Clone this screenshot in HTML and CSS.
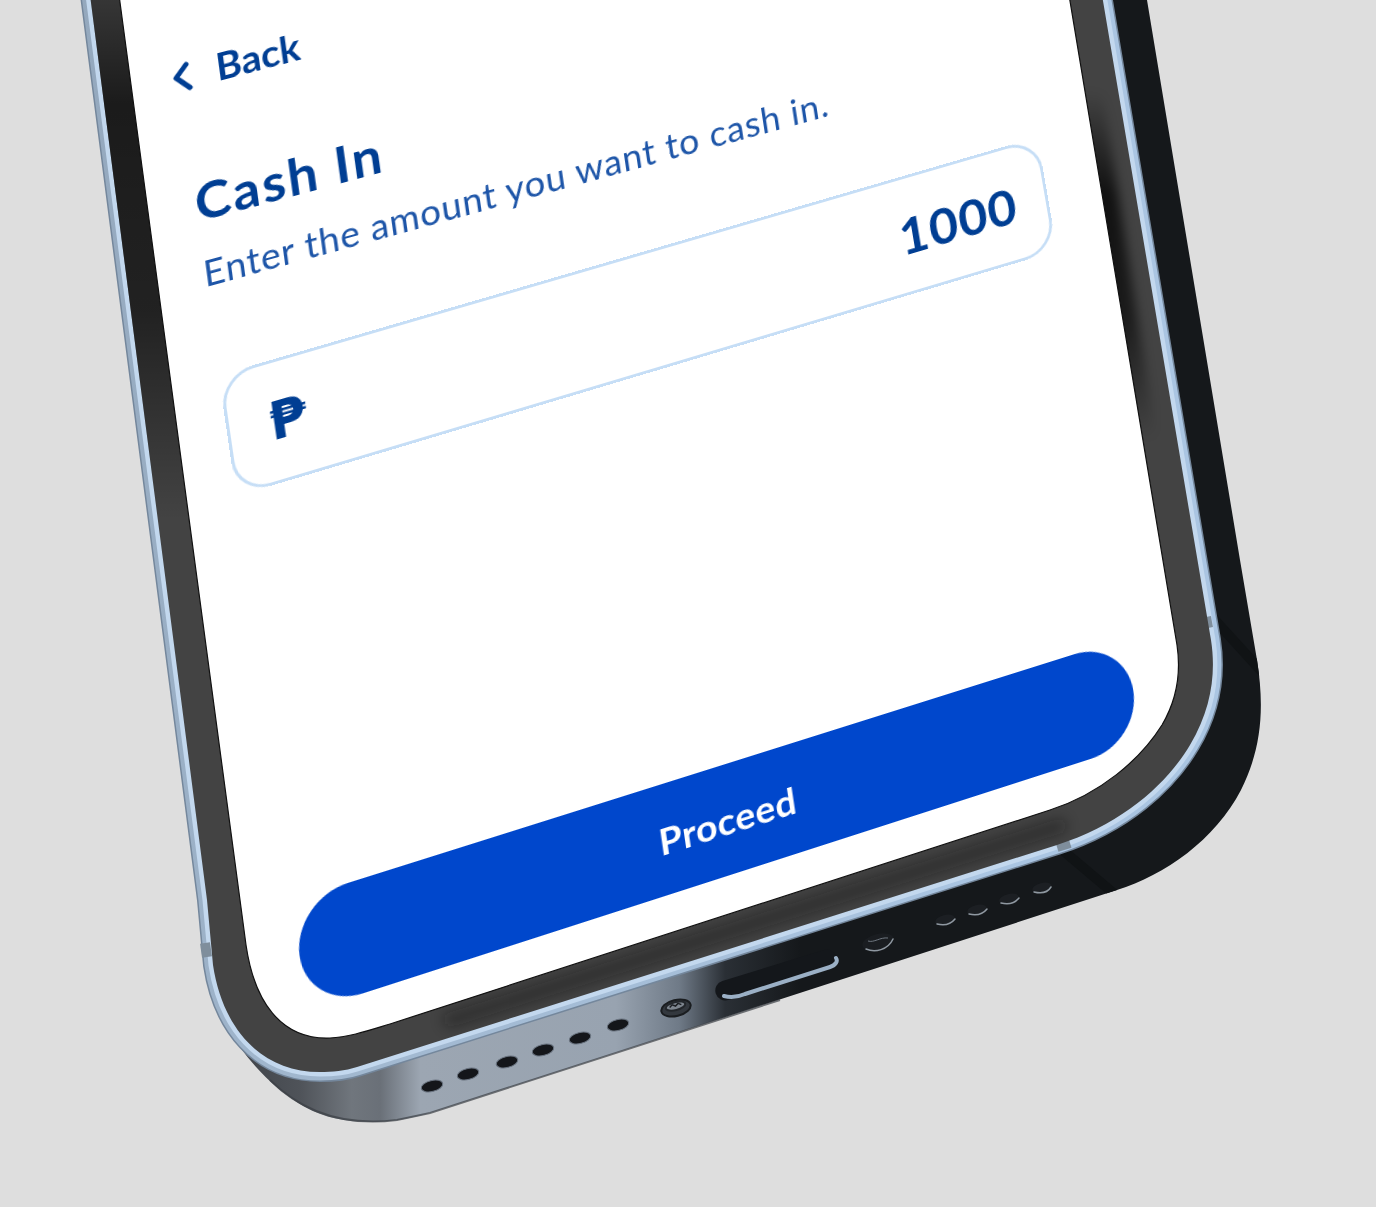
FILE: index.html
```html
<!DOCTYPE html>
<html lang="en">
<head>
<meta charset="utf-8">
<title>Cash In</title>
<link rel="stylesheet" href="styles.css">
</head>
<body>
<main class="stage">
  <svg class="device" viewBox="0 0 1376 1207" width="1376" height="1207" aria-hidden="true">
    <defs>
      <linearGradient id="bodyGrad" gradientUnits="userSpaceOnUse" x1="225" y1="0" x2="800" y2="0">
        <stop offset="0" stop-color="#3c4046"/>
        <stop offset="0.13" stop-color="#4f5359"/>
        <stop offset="0.22" stop-color="#70767d"/>
        <stop offset="0.27" stop-color="#6a7078"/>
        <stop offset="0.34" stop-color="#9ca6b2"/>
        <stop offset="0.68" stop-color="#98a3b0"/>
        <stop offset="0.79" stop-color="#6f7a87"/>
        <stop offset="0.87" stop-color="#2a2f35"/>
        <stop offset="1" stop-color="#15181b"/>
      </linearGradient>
      <linearGradient id="rimGrad" gradientUnits="userSpaceOnUse" x1="80" y1="0" x2="1000" y2="0">
        <stop offset="0" stop-color="#94a8bd"/>
        <stop offset="0.2" stop-color="#a0b6cd"/>
        <stop offset="1" stop-color="#aac5e2"/>
      </linearGradient>
      <linearGradient id="shadeLeft" gradientUnits="userSpaceOnUse" x1="0" y1="0" x2="0" y2="520">
        <stop offset="0" stop-color="#000" stop-opacity="0.2"/>
        <stop offset="0.2" stop-color="#000" stop-opacity="0.6"/>
        <stop offset="0.6" stop-color="#000" stop-opacity="0.5"/>
        <stop offset="1" stop-color="#000" stop-opacity="0"/>
      </linearGradient>
      <linearGradient id="shadeRight" gradientUnits="userSpaceOnUse" x1="0" y1="90" x2="0" y2="440">
        <stop offset="0" stop-color="#000" stop-opacity="0"/>
        <stop offset="0.3" stop-color="#000" stop-opacity="0.75"/>
        <stop offset="0.65" stop-color="#000" stop-opacity="0.6"/>
        <stop offset="1" stop-color="#000" stop-opacity="0"/>
      </linearGradient>
      <filter id="blurSoft" x="-60%" y="-20%" width="220%" height="140%"><feGaussianBlur stdDeviation="6"/></filter>
      <filter id="blurLine" filterUnits="userSpaceOnUse" x="350" y="760" width="800" height="320"><feGaussianBlur stdDeviation="7"/></filter>
      <clipPath id="bezelClip">
        <path d="M90 -5 L207 900 L213 965 C222 1025 258 1072 320 1072 C332 1072 345 1071 357 1067 L1057 845 C1125 823 1168 782 1190 745 C1212 708 1216 672 1211 640 L1102 -5 Z"/>
      </clipPath>
      <clipPath id="bodyClip">
        <path d="M1147 0 L1240 560 L1257 660 C1265 710 1261 750 1241 790 C1215 840 1165 875 1117 890 L430 1113 C390 1125 340 1127 305 1107 C275 1090 250 1065 225 1025 L300 900 L1000 0 Z"/>
      </clipPath>
    </defs>

    <path class="body" d="M1147 0 L1240 560 L1257 660 C1265 710 1261 750 1241 790 C1215 840 1165 875 1117 890 L430 1113 C390 1125 340 1127 305 1107 C275 1090 250 1065 225 1025 L300 900 L1000 0 Z"/>
    <path class="body-edge" d="M270 1080 C300 1110 340 1127 397 1120 L430 1113 L780 1000"/>
    <g clip-path="url(#bodyClip)">
      <path class="seam" d="M1060 848 L1118 897"/>
      <path class="seam" d="M1213 618 L1265 675"/>
    </g>

    <g class="holes">
      <ellipse cx="432" cy="1086" rx="11" ry="5.5" transform="rotate(-14 432 1086)"/>
      <ellipse cx="468" cy="1074" rx="11" ry="5.5" transform="rotate(-14 468 1074)"/>
      <ellipse cx="507" cy="1062" rx="11" ry="5.5" transform="rotate(-14 507 1062)"/>
      <ellipse cx="543" cy="1050" rx="11" ry="5.5" transform="rotate(-14 543 1050)"/>
      <ellipse cx="580" cy="1038" rx="11" ry="5.5" transform="rotate(-14 580 1038)"/>
      <ellipse cx="618" cy="1025" rx="11" ry="5.5" transform="rotate(-14 618 1025)"/>
    </g>
    <g transform="rotate(-14 676 1008)">
      <ellipse class="screw-base" cx="676" cy="1008" rx="15" ry="8"/>
      <ellipse class="screw-top" cx="676" cy="1006" rx="10" ry="4"/>
      <path class="screw-star" d="M670 1006 L673 1004 L676 1006 L679 1004 L682 1006"/>
    </g>

    <rect class="port" x="713" y="965" width="126" height="20" rx="10" transform="rotate(-17 776 975)"/>
    <path class="port-light" d="M724 996 C731 998 738 997 745 994 L830 967 C836 965 838 961 836 958"/>

    <ellipse class="dark-hole" cx="878" cy="942" rx="16" ry="8" transform="rotate(-14 878 942)"/>
    <path class="crescent" d="M866 949 C875 953 888 950 893 939"/>
    <path class="crescent-thin" d="M868 941 C874 943 880 937 888 938"/>
    <g class="dark-holes">
      <ellipse cx="945" cy="920" rx="10" ry="5" transform="rotate(-14 945 920)"/>
      <ellipse cx="977" cy="910" rx="10" ry="5" transform="rotate(-14 977 910)"/>
      <ellipse cx="1009" cy="899" rx="10" ry="5" transform="rotate(-14 1009 899)"/>
      <ellipse cx="1042" cy="888" rx="10" ry="5" transform="rotate(-14 1042 888)"/>
    </g>
    <path class="crescent" d="M937 924 C945 926 951 924 955 919"/>
    <path class="crescent" d="M969 914 C977 916 983 914 987 909"/>
    <path class="crescent" d="M1001 903 C1009 905 1015 903 1019 898"/>
    <path class="crescent" d="M1034 892 C1042 894 1048 892 1051 887"/>

    <g class="rim">
      <path class="rim-edge" d="M90 -5 L207 900 L213 965 C222 1025 258 1072 320 1072 C332 1072 345 1071 357 1067 L1057 845 C1125 823 1168 782 1190 745 C1212 708 1216 672 1211 640 L1102 -5 Z"/>
      <path class="rim-main" d="M90 -5 L207 900 L213 965 C222 1025 258 1072 320 1072 C332 1072 345 1071 357 1067 L1057 845 C1125 823 1168 782 1190 745 C1212 708 1216 672 1211 640 L1102 -5 Z"/>
      <path class="rim-shine" d="M90 -5 L207 900 L213 965 C222 1025 258 1072 320 1072 C332 1072 345 1071 357 1067 L1057 845 C1125 823 1168 782 1190 745 C1212 708 1216 672 1211 640 L1102 -5 Z"/>
    </g>
    <path class="rim-band" d="M1206 617 L1208 628"/>
    <path class="rim-band" d="M1057 847 L1070 843"/>
    <path class="rim-band" d="M205 943 L207 957"/>

    <path class="bezel" d="M90 -5 L207 900 L213 965 C222 1025 258 1072 320 1072 C332 1072 345 1071 357 1067 L1057 845 C1125 823 1168 782 1190 745 C1212 708 1216 672 1211 640 L1102 -5 Z"/>
    <g clip-path="url(#bezelClip)">
      <polygon class="shade-left" points="85,-5 140,-5 240,560 155,560"/>
      <polygon class="shade-right" points="1050,90 1102,90 1156,440 1105,440"/>
      <path class="shade-line" d="M450 1020 L1060 826"/>
    </g>

    <path class="glass" d="M119 -5 L240 900 L246 945 C254 1000 280 1040 330 1038 C350 1037 370 1030 390 1024 L1050 810 C1100 794 1140 760 1162 725 C1178 698 1181 672 1177 645 L1069 -5 Z"/>
  </svg>

  <section class="screen">
    <a class="back">
      <svg class="chevron" viewBox="0 0 20 30" width="20" height="30" aria-hidden="true">
        <path d="M15 3 L4 14 L16 27"/>
      </svg>
      <span>Back</span>
    </a>
    <h1 class="title">Cash In</h1>
    <p class="subtitle">Enter the amount you want to cash in.</p>
    <div class="amount">
      <span class="peso">₱</span>
      <span class="value">1000</span>
    </div>
    <button class="proceed">Proceed</button>
  </section>
</main>
</body>
</html>
```
FILE: styles.css
```css
* { box-sizing: border-box; }
html, body { margin: 0; padding: 0; }
body { background: #dedede; font-family: "Lato", "Open Sans", sans-serif; }
.stage { position: relative; width: 1376px; height: 1207px; overflow: hidden; background: #dedede; }
.device { position: absolute; left: 0; top: 0; display: block; }

.body { fill: url(#bodyGrad); }
.body-edge { fill: none; stroke: #3a3f45; stroke-width: 2; opacity: .7; }
.seam { fill: none; stroke: #101315; stroke-width: 10; }
.holes ellipse { fill: #14161a; stroke: #6a7480; stroke-width: 1; }
.screw-base { fill: #33383e; stroke: #1a1d20; stroke-width: 2; }
.screw-top { fill: #7d858e; stroke: #23272b; stroke-width: 2; }
.screw-star { fill: none; stroke: #1c1f23; stroke-width: 1.5; }
.port { fill: #14171b; }
.port-light { fill: none; stroke: #9bb0c6; stroke-width: 4; stroke-linecap: round; stroke-linejoin: round; }
.dark-hole { fill: #1a1d21; }
.dark-holes ellipse { fill: #1c1f23; }
.crescent { fill: none; stroke: #8f98a1; stroke-width: 1.5; stroke-linecap: round; }
.crescent-thin { fill: none; stroke: #6f7780; stroke-width: 1; }

.rim path { fill: none; stroke-linejoin: round; }
.rim-edge { stroke: #74879c; stroke-width: 20; }
.rim-main { stroke: url(#rimGrad); stroke-width: 17; }
.rim-shine { stroke: #c3d8ee; stroke-width: 9; }
.rim-band { fill: none; stroke: #7f8e9c; stroke-width: 10; }

.bezel { fill: #434343; }
.shade-left { fill: url(#shadeLeft); }
.shade-right { fill: url(#shadeRight); filter: url(#blurSoft); }
.shade-line { fill: none; stroke: #111; stroke-width: 14; opacity: .4; stroke-linecap: round; filter: url(#blurLine); }
.glass { fill: #ffffff; stroke: #111; stroke-width: 1.2; }

.screen {
  position: absolute;
  left: 0;
  top: 0;
  width: 940px;
  height: 1030px;
  padding: 22px 56px 50px 45px;
  display: flex;
  flex-direction: column;
  align-items: stretch;
  color: #003e93;
  transform-origin: 0 0;
  transform: matrix3d(1.03989, -0.26355, 0, 0.00006438, 0.12583, 0.97322, 0, -0.0000306, 0, 0, 1, 0, 133.7, 103.3, 0, 1) translate(0, -60px);
}
.back { display: flex; align-items: center; gap: 23px; height: 46px; font-size: 38px; font-weight: 700; line-height: 46px; }
.chevron { margin-left: -6px; margin-top: 4px; flex: none; }
.chevron path { fill: none; stroke: #003e93; stroke-width: 5; stroke-linecap: round; stroke-linejoin: round; }
.title { margin: 78px 0 0; font-size: 52px; font-weight: 700; line-height: 56px; letter-spacing: 2.2px; }
.subtitle { margin: 24px 0 0 -1px; font-size: 36px; font-weight: 400; line-height: 40px; letter-spacing: 0.9px; color: #1d55a8; }
.amount {
  margin: 79px 0 0 1px;
  height: 122px;
  border: 3px solid #c6def6;
  border-radius: 34px;
  padding: 0 30px 0 38px;
  display: flex;
  align-items: center;
  justify-content: space-between;
  background: #fff;
  transform: rotate(-0.6deg);
}
.peso { font-family: "DejaVu Sans", sans-serif; font-size: 52px; font-weight: 700; line-height: 1; }
.value { font-size: 52px; font-weight: 700; line-height: 1; letter-spacing: 1px; }
.proceed {
  margin: auto -6px 0 3px;
  height: 108px;
  border: 0;
  border-radius: 54px;
  background: #0047cc;
  color: #fff;
  font-family: inherit;
  font-size: 37px;
  font-weight: 700;
  letter-spacing: .5px;
}
```
